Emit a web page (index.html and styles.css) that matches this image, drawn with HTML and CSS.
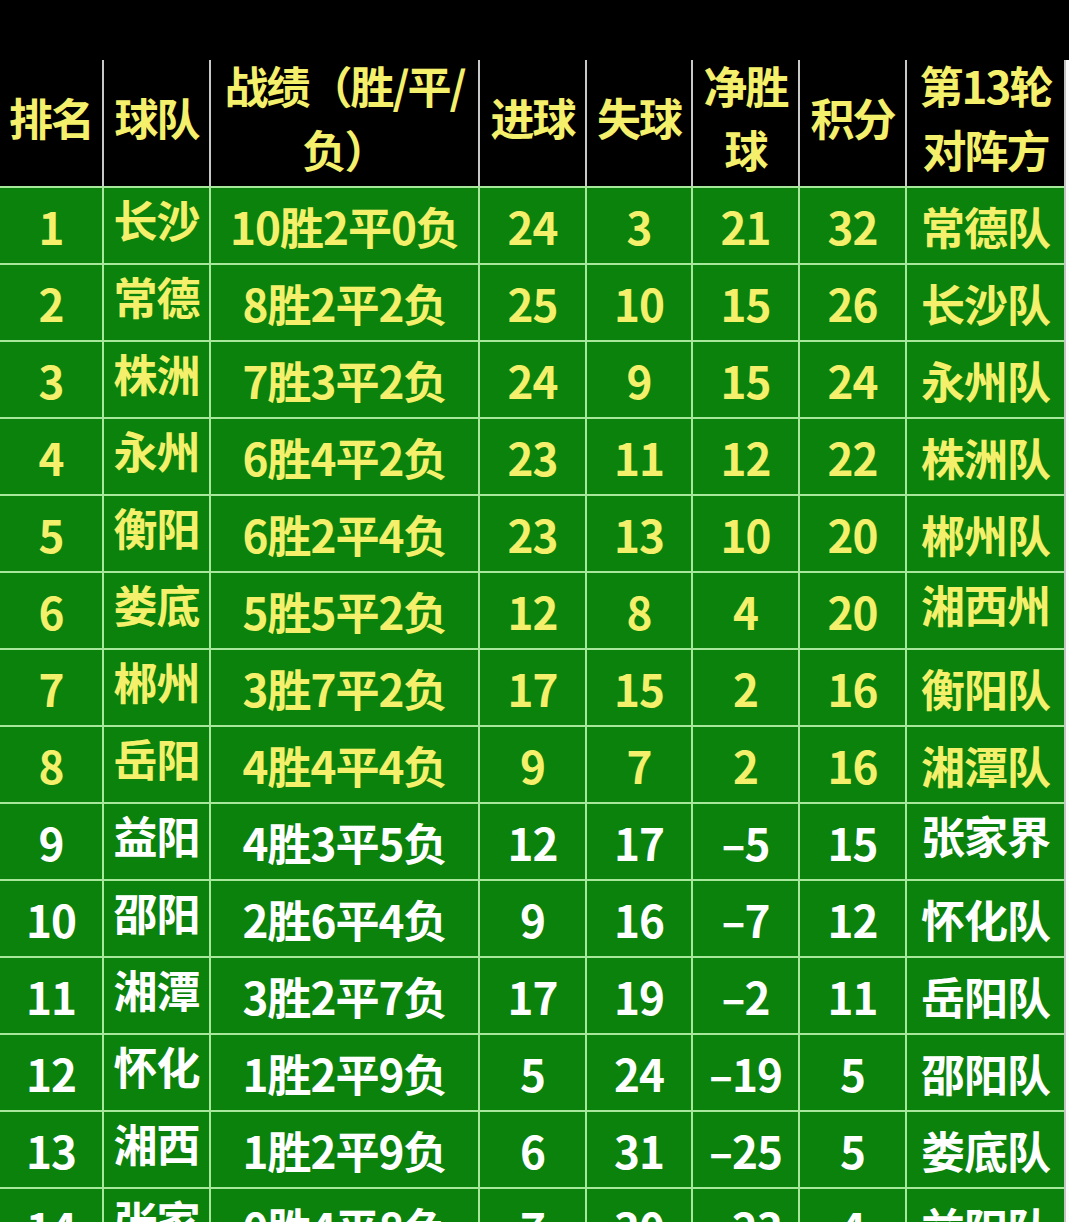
FILE: index.html
```html
<!DOCTYPE html>
<html lang="zh">
<head>
<meta charset="utf-8">
<link rel="stylesheet" href="styles.css">
</head>
<body>
<div class="topbar"></div>
<div class="board">
  <div class="head">
    <div class="hc">排名</div>
    <div class="hc">球队</div>
    <div class="hc">战绩（胜/平/<br>负）</div>
    <div class="hc">进球</div>
    <div class="hc">失球</div>
    <div class="hc">净胜<br>球</div>
    <div class="hc">积分</div>
    <div class="hc">第13轮<br>对阵方</div>
  </div>
  <div class="body">
    <div class="row y"><div class="c">1</div><div class="c t">长沙</div><div class="c">10胜2平0负</div><div class="c">24</div><div class="c">3</div><div class="c">21</div><div class="c">32</div><div class="c">常德队</div></div>
    <div class="row y"><div class="c">2</div><div class="c t">常德</div><div class="c">8胜2平2负</div><div class="c">25</div><div class="c">10</div><div class="c">15</div><div class="c">26</div><div class="c">长沙队</div></div>
    <div class="row y"><div class="c">3</div><div class="c t">株洲</div><div class="c">7胜3平2负</div><div class="c">24</div><div class="c">9</div><div class="c">15</div><div class="c">24</div><div class="c">永州队</div></div>
    <div class="row y"><div class="c">4</div><div class="c t">永州</div><div class="c">6胜4平2负</div><div class="c">23</div><div class="c">11</div><div class="c">12</div><div class="c">22</div><div class="c">株洲队</div></div>
    <div class="row y"><div class="c">5</div><div class="c t">衡阳</div><div class="c">6胜2平4负</div><div class="c">23</div><div class="c">13</div><div class="c">10</div><div class="c">20</div><div class="c">郴州队</div></div>
    <div class="row y"><div class="c">6</div><div class="c t">娄底</div><div class="c">5胜5平2负</div><div class="c">12</div><div class="c">8</div><div class="c">4</div><div class="c">20</div><div class="c t">湘西州</div></div>
    <div class="row y"><div class="c">7</div><div class="c t">郴州</div><div class="c">3胜7平2负</div><div class="c">17</div><div class="c">15</div><div class="c">2</div><div class="c">16</div><div class="c">衡阳队</div></div>
    <div class="row y"><div class="c">8</div><div class="c t">岳阳</div><div class="c">4胜4平4负</div><div class="c">9</div><div class="c">7</div><div class="c">2</div><div class="c">16</div><div class="c">湘潭队</div></div>
    <div class="row w"><div class="c">9</div><div class="c t">益阳</div><div class="c">4胜3平5负</div><div class="c">12</div><div class="c">17</div><div class="c">–5</div><div class="c">15</div><div class="c t">张家界</div></div>
    <div class="row w"><div class="c">10</div><div class="c t">邵阳</div><div class="c">2胜6平4负</div><div class="c">9</div><div class="c">16</div><div class="c">–7</div><div class="c">12</div><div class="c">怀化队</div></div>
    <div class="row w"><div class="c">11</div><div class="c t">湘潭</div><div class="c">3胜2平7负</div><div class="c">17</div><div class="c">19</div><div class="c">–2</div><div class="c">11</div><div class="c">岳阳队</div></div>
    <div class="row w"><div class="c">12</div><div class="c t">怀化</div><div class="c">1胜2平9负</div><div class="c">5</div><div class="c">24</div><div class="c">–19</div><div class="c">5</div><div class="c">邵阳队</div></div>
    <div class="row w"><div class="c">13</div><div class="c t">湘西</div><div class="c">1胜2平9负</div><div class="c">6</div><div class="c">31</div><div class="c">–25</div><div class="c">5</div><div class="c">娄底队</div></div>
    <div class="row w"><div class="c">14</div><div class="c t">张家</div><div class="c">0胜4平8负</div><div class="c">7</div><div class="c">30</div><div class="c">–23</div><div class="c">4</div><div class="c">益阳队</div></div>
  </div>
</div>
</body>
</html>
```

FILE: styles.css
```css
html, body {
  margin: 0;
  padding: 0;
  background: #fbfbfb;
  height: 1222px;
  overflow: hidden;
}
body {
  font-family: "Noto Sans CJK SC", "Noto Sans", sans-serif;
  font-weight: 700;
}
.topbar {
  height: 60px;
  background: #000;
}
.board {
  width: 1064px;
  border-right: 2px solid #c4c4c4;
}
.head {
  display: grid;
  grid-template-columns: 102px 105px 267px 105px 104px 105px 105px 157px;
  grid-template-rows: 126px;
  column-gap: 2px;
  background: #c8c8c8;
  height: 126px;
}
.hc {
  background: #000;
  color: #f4f06c;
  font-size: 44px;
  line-height: 64px;
  letter-spacing: -2px;
  display: flex;
  align-items: center;
  justify-content: center;
  text-align: center;
  white-space: nowrap;
  padding-bottom: 12px;
  box-sizing: border-box;
  min-height: 0;
}
.body {
  display: flex;
  flex-direction: column;
  gap: 2px;
  background: #a8e89c;
  border-top: 2px solid #a8e89c;
}
.row {
  display: grid;
  grid-template-columns: 102px 105px 267px 105px 104px 105px 105px 157px;
  grid-template-rows: 75px;
  column-gap: 2px;
  height: 75px;
  flex: none;
}
.c {
  background: #0a820b;
  font-size: 44px;
  letter-spacing: -1px;
  display: flex;
  align-items: center;
  justify-content: center;
  white-space: nowrap;
  overflow: hidden;
  box-sizing: border-box;
}
.c.t {
  padding-bottom: 14px;
}
.row.y .c { color: #f4f06c; }
.row.w .c { color: #ffffff; }
```
